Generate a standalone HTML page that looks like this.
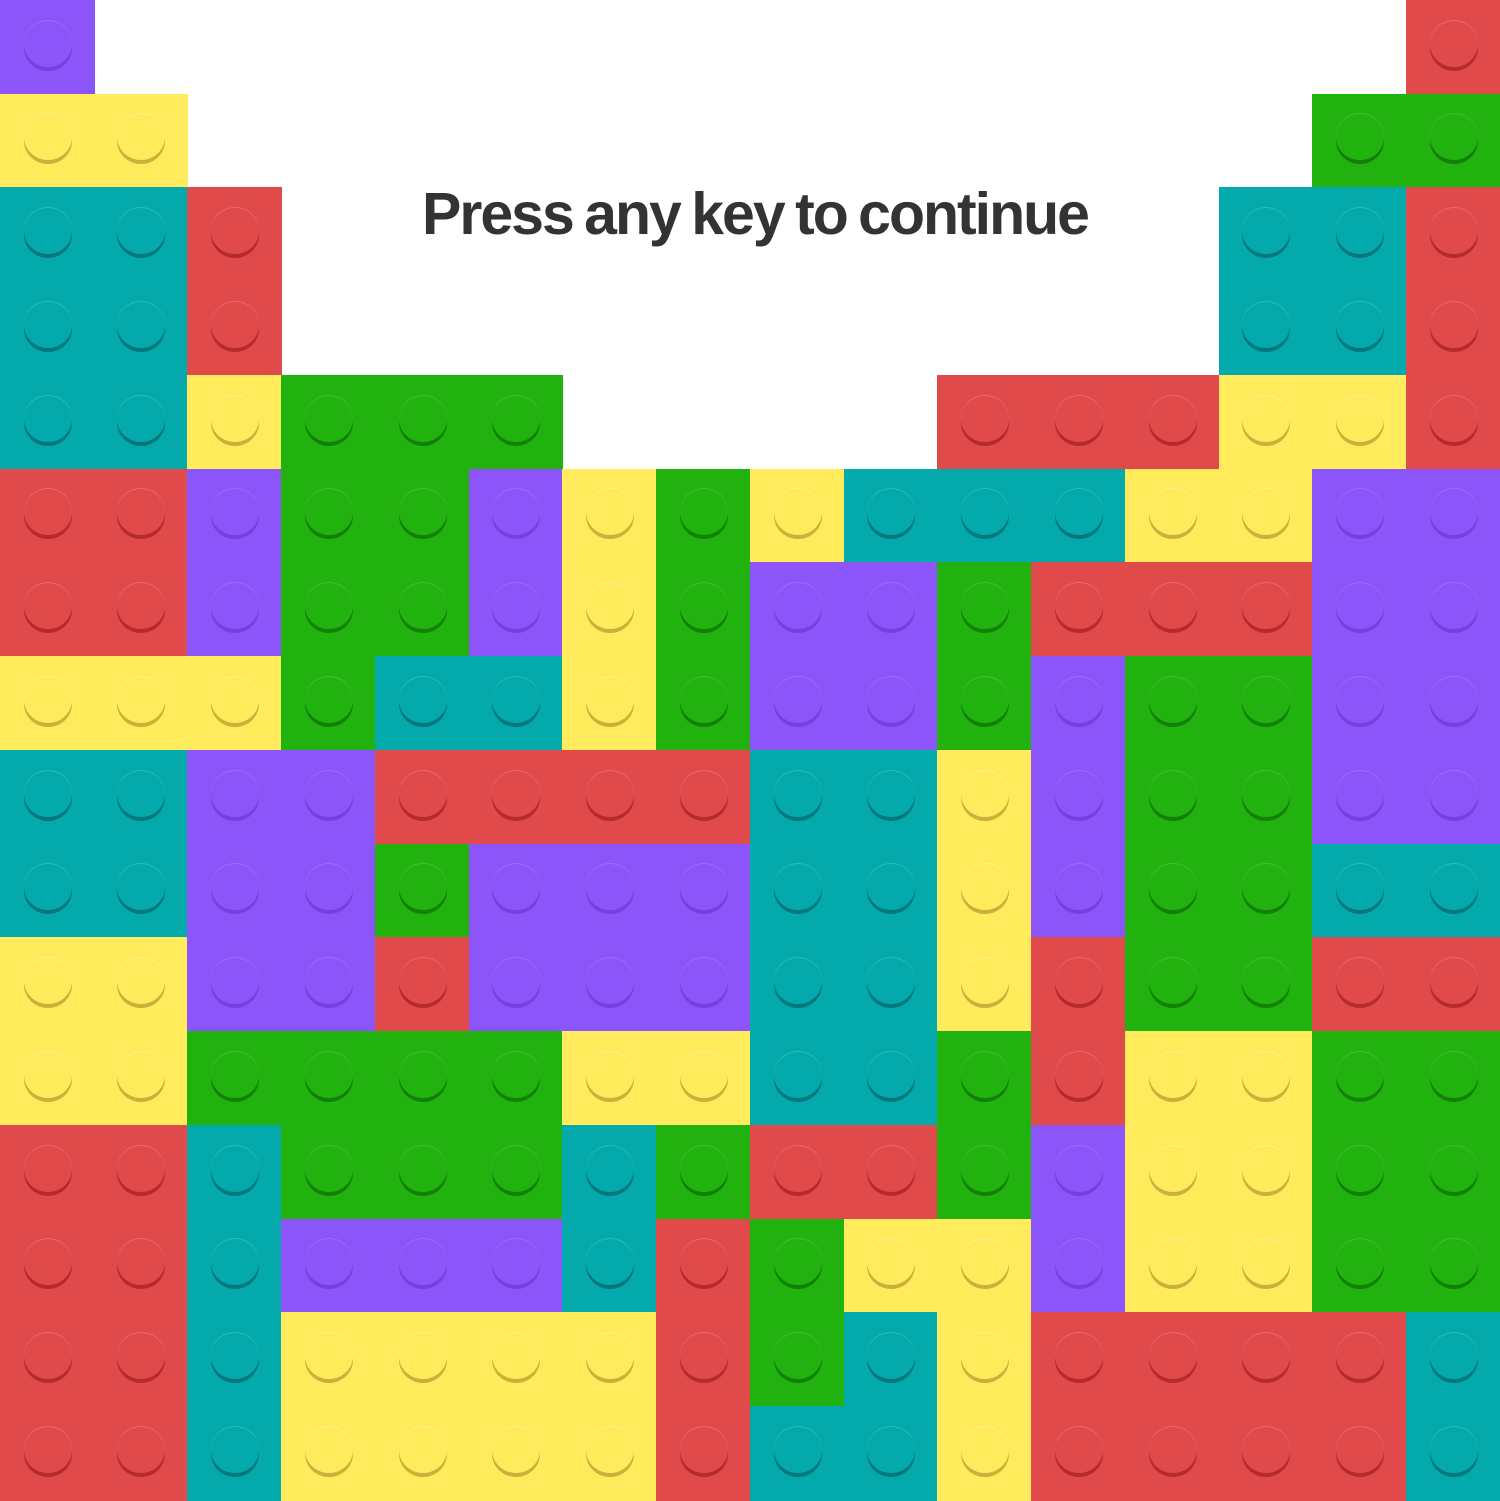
<!DOCTYPE html>
<html><head><meta charset="utf-8"><style>
html,body{margin:0;padding:0;width:1500px;height:1500px;overflow:hidden;background:#fff}
#g{position:absolute;left:0;top:0;width:1500px;height:1500px}
.c{position:absolute;box-sizing:border-box}
.s{position:absolute;width:48px;height:46px;border-radius:50%;left:50%;top:50%;margin-left:-24px;margin-top:-27px}
#t{position:absolute;left:0;width:1510px;top:180px;text-align:center;font-family:"Liberation Sans",sans-serif;font-weight:bold;font-size:59px;color:#333;letter-spacing:-2px;word-spacing:-3px}
</style></head><body>
<div id="g"></div>
<div id="t">Press any key to continue</div>
<script>
var rows=[
"PWWWWWWWWWWWWWWR",
"YYWWWWWWWWWWWWGG",
"TTRWWWWWWWWWWTTR",
"TTRWWWWWWWWWWTTR",
"TTYGGGWWWWRRRYYR",
"RRPGGPYGYTTTYYPP",
"RRPGGPYGPPGRRRPP",
"YYYGTTYGPPGPGGPP",
"TTPPRRRRTTYPGGPP",
"TTPPGPPPTTYPGGTT",
"YYPPRPPPTTYRGGRR",
"YYGGGGYYTTGRYYGG",
"RRTGGGTGRRGPYYGG",
"RRTPPPTRGYYPYYGG",
"RRTYYYYRGTYRRRRT",
"RRTYYYYRTTYRRRRT"];
var col={P:["#8b55f9","#7640e0","#9d6cff"],Y:["#ffeb5b","#c9b13a","#fff28a"],T:["#04a9ac","#03787a","#2bbcbf"],R:["#e04a4b","#b72a2b","#ea6a6a"],G:["#22b20f","#138008","#3cc228"]};
var g=document.getElementById('g'),h='';
var b=[0,94,187,281,375,469,562,656,750,844,937,1031,1125,1219,1312,1406,1500];
for(var r=0;r<16;r++)for(var c=0;c<16;c++){var k=rows[r][c];if(k=='W')continue;var q=col[k];
h+='<div class="c" style="left:'+b[c]+'px;top:'+b[r]+'px;width:'+(b[c+1]-b[c]+1)+'px;height:'+(b[r+1]-b[r]+1)+'px;background:'+q[0]+'"><div class="s" style="background:'+q[0]+';box-shadow:0 4px 0 '+q[1]+',0 -1px 0 '+q[2]+'"></div></div>';}
g.innerHTML=h;
</script>
</body></html>
